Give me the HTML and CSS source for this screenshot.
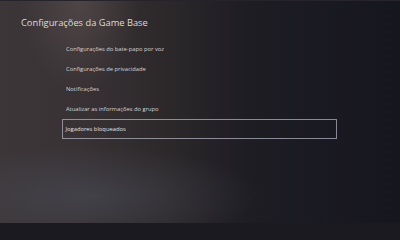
FILE: index.html
```html
<!DOCTYPE html>
<html lang="pt">
<head>
<meta charset="utf-8">
<link rel="stylesheet" href="styles.css">
</head>
<body>
<div class="screen">
  <h1 class="title">Configurações da Game Base</h1>
  <ul class="menu">
    <li class="item">Configurações do bate-papo por voz</li>
    <li class="item">Configurações de privacidade</li>
    <li class="item">Notificações</li>
    <li class="item">Atualizar as informações do grupo</li>
    <li class="item selected">Jogadores bloqueados</li>
  </ul>
</div>
</body>
</html>
```
FILE: styles.css
```css
html, body {
  margin: 0;
  padding: 0;
  width: 400px;
  height: 225px;
  overflow: hidden;
  background: #1a1a20;
}
.screen {
  box-sizing: border-box;
  width: 400px;
  height: 225px;
  border-top: 1px solid #26232a;
  border-bottom: 2px solid #1a1a20;
  display: flex;
  flex-direction: column;
  font-family: "Open Sans", "Noto Sans", sans-serif;
  background:
    radial-gradient(ellipse 60px 90px at 80px 0px, rgba(120,105,100,0.35), rgba(120,105,100,0) 100%),
    radial-gradient(ellipse 170px 50px at 90px 195px, rgba(80,85,98,0.45), rgba(80,85,98,0) 100%),
    linear-gradient(90deg, #3c3638 0%, #383235 20%, #2c282a 42%, #1e1d24 62%, #16161f 100%);
}
.title {
  margin: 14px 0 0 21px;
  font-size: 9.3px;
  line-height: 15px;
  font-weight: 400;
  color: #dedcdc;
}
.menu {
  list-style: none;
  margin: 9px 0 0 62px;
  padding: 0;
  width: 275px;
  display: flex;
  flex-direction: column;
}
.item {
  box-sizing: border-box;
  height: 20px;
  display: flex;
  align-items: center;
  padding-left: 4px;
  font-size: 5.8px;
  color: #d6d4d4;
}
.item.selected {
  border: 1.5px solid rgba(175,175,188,0.75);
  padding-left: 2.5px;
  color: #e2e0e0;
}
```
